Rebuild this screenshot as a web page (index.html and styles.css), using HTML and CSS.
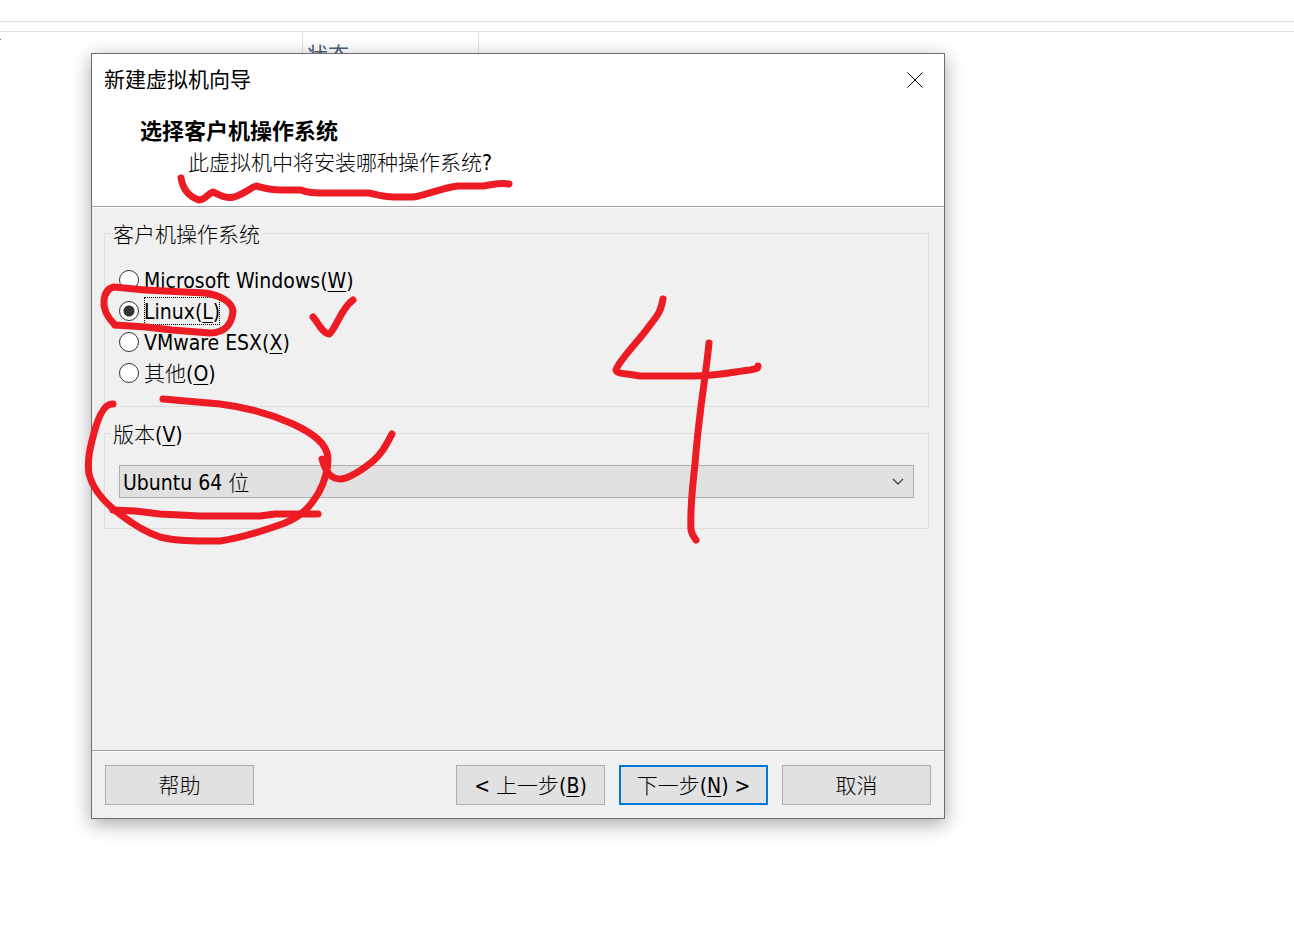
FILE: index.html
```html
<!DOCTYPE html>
<html lang="zh-CN">
    <head>
        <meta charset="UTF-8" />
        <meta name="viewport" content="width=device-width, initial-scale=1.0" />
        <title>新建虚拟机向导</title>
        <link rel="stylesheet" href="styles.css">
    </head>
    <body>
        <!-- Window behind the dialog -->
        <div class="explorer">
            <div class="toolbar"></div>
            <div class="columns">
                <div class="column column-name"><span class="tick"></span></div>
                <div class="column column-status">状态</div>
            </div>
        </div>

        <form class="dialog">
            <div class="titlebar">
                <span>新建虚拟机向导</span>
                <button type="button" class="close" aria-label="关闭">
                    <svg width="16" height="16" viewBox="0 0 16 16"><path d="M0.5 0.5l15 15M15.5 0.5l-15 15" /></svg>
                </button>
            </div>
            <div class="header">
                <h1>选择客户机操作系统</h1>
                <p>此虚拟机中将安装哪种操作系统?</p>
            </div>

            <div class="content">
                <fieldset class="group group-system">
                    <legend>客户机操作系统</legend>
                    <label class="option"><input type="radio" name="system"><span>Microsoft Windows(<u>W</u>)</span></label>
                    <label class="option"><input type="radio" name="system" checked><span>Linux(<u>L</u>)</span></label>
                    <label class="option"><input type="radio" name="system"><span>VMware ESX(<u>X</u>)</span></label>
                    <label class="option"><input type="radio" name="system"><span>其他(<u>O</u>)</span></label>
                </fieldset>

                <fieldset class="group group-version">
                    <legend><label for="version">版本(<u>V</u>)</label></legend>
                    <div class="select-wrap">
                        <select id="version">
                            <option>Ubuntu 64 位</option>
                        </select>
                        <svg class="arrow" width="12" height="8" viewBox="0 0 12 8"><path d="M1 1l5 5 5-5" /></svg>
                    </div>
                </fieldset>
            </div>

            <div class="footer">
                <button type="button" class="help">帮助</button>
                <button type="button">&lt; 上一步(<u>B</u>)</button>
                <button type="submit" class="default">下一步(<u>N</u>) &gt;</button>
                <button type="button">取消</button>
            </div>
        </form>

        <!-- Red pen marks -->
        <svg class="marks" width="960" height="600" viewBox="0 0 960 600">
            <path d="M181 178C183 190 190 197 199 200C206 200 208 193 213 192C220 195 225 199 234 197C244 194 250 188 256 186C264 188 270 190 280 190H301C306 192 312 193 320 193H369C378 195 384 197 394 197H413C427 195 441 188 458 186H483C492 185 500 182 509 184" />
            <path d="M115 325C107 317 103 309 104 300C105 293 108 288 114 287L145 290L205 293C220 295 232 302 233 311C232 323 226 333 210 333L172 330L146 327L115 325" />
            <path d="M313 317C318 322 322 333 329 334C335 331 341 308 353 300" />
            <path d="M113 404C104 403 98 418 94 433C90 448 87 460 89 474C94 494 110 507 121 515C134 525 145 532 160 537C175 541 192 541 220 541C242 538 263 531 285 523C304 515 312 504 319 492C325 481 328 471 328 458C327 443 312 433 293 424C270 414 245 407 220 404L163 399" />
            <path d="M113 510L135 511L160 514L200 516H260L275 514H318" />
            <path d="M322 459C326 473 331 479 341 479C351 478 363 469 372 462C382 454 386 445 392 434" />
            <path d="M663 299C661 310 659 314 650 325C639 341 619 360 616 370C617 374 623 373 640 376H692C717 376 733 372 750 370C757 369 758 368 758 366" />
            <path d="M709 343C706 375 699 411 695 464C692 490 690 510 691 530C692 535 694 537 696 540" />
        </svg>
    </body>
</html>
```
FILE: styles.css
```css
body {
    margin: 0;
    min-height: 100vh;
    background: white;
    color: black;
    font-family: "DejaVu Sans Condensed", "Noto Sans CJK SC", sans-serif;
    font-size: 21px;
    line-height: 28px;
}
.toolbar {
    height: 21px;
    border-bottom: 1px solid #e0e0e0;
    margin-bottom: 9px;
}
.columns {
    display: flex;
    border-top: 1px solid #e0e0e0;
}
.column {
    padding: 7px 4px;
    border-right: 1px solid #e0e0e0;
    box-sizing: border-box;
    color: #4c607a;
}
.column-name {
    width: 303px;
    padding-left: 0;
}
.column-status {
    width: 176px;
    padding-top: 9px;
}
.tick {
    display: block;
    width: 1px;
    height: 1px;
    background: #777;
}
.dialog {
    position: absolute;
    left: 91px;
    top: 53px;
    width: 854px;
    box-sizing: border-box;
    border: 1px solid #6e6e6e;
    background: #f0f0f0;
    box-shadow: 0 5px 18px rgba(0,0,0,0.35);
}
.titlebar {
    display: flex;
    justify-content: space-between;
    align-items: center;
    height: 52px;
    padding: 0 21px 0 12px;
    background: white;
}
.close {
    display: flex;
    padding: 0;
    border: none;
    background: none;
}
.close path {
    fill: none;
    stroke: black;
    stroke-width: 1;
}
.header {
    padding: 12px 48px 29px;
    background: white;
    border-bottom: 1px solid #a0a0a0;
}
h1 {
    margin: 0 0 3px;
    font-size: 22px;
    line-height: 28px;
}
.header p {
    margin: 0 0 0 48px;
}
.content {
    height: 543px;
    padding: 11px 15px 0 12px;
    box-sizing: border-box;
    border-top: 1px solid white;
}
.header p,
.content,
.footer {
    font-weight: 300;
}
.group {
    margin: 0 0 12px;
    border: 1px solid #dcdcdc;
}
.group legend {
    height: 28px;
    margin-left: 6px;
    padding: 0 2px;
    line-height: 32px;
}
.group-system {
    display: flex;
    flex-direction: column;
    padding: 19px 0;
}
.option {
    display: flex;
    align-items: center;
    gap: 5px;
    margin: 0 14px 3px;
}
.option:last-child {
    margin-bottom: 0;
}
.option input {
    appearance: none;
    width: 20px;
    height: 20px;
    margin: 0;
    border: 1px solid #333;
    border-radius: 50%;
    background: white;
}
.option span {
    padding-top: 2px;
    line-height: 26px;
}
.option input:checked {
    background: radial-gradient(circle, #333 5px, white 6px);
}
.option input:checked + span {
    outline: 1px dotted black;
    outline-offset: -1px;
}
u {
    text-decoration-thickness: 1px;
    text-underline-offset: 3px;
}
.group-version {
    padding: 18px 0 30px;
}
.select-wrap {
    position: relative;
    margin: 0 14px;
}
select {
    appearance: none;
    display: block;
    width: 100%;
    height: 33px;
    padding: 2px 30px 0 3px;
    border: 1px solid #adadad;
    border-radius: 0;
    background: #e1e1e1;
    color: black;
    font: inherit;
}
.arrow {
    position: absolute;
    right: 10px;
    top: 13px;
    pointer-events: none;
}
.arrow path {
    fill: none;
    stroke: #444;
    stroke-width: 1.3;
}
.footer {
    display: flex;
    gap: 14px;
    padding: 14px 13px 13px;
    border-top: 1px solid #a0a0a0;
    box-shadow: inset 0 1px white;
}
.footer button {
    width: 149px;
    height: 40px;
    padding: 2px 0 0;
    border: 1px solid #adadad;
    background: #e1e1e1;
    color: black;
    font: inherit;
}
.footer .help {
    margin-right: auto;
}
.footer .default {
    border: 2px solid #0078d7;
}
.marks {
    position: absolute;
    left: 0;
    top: 0;
    pointer-events: none;
}
.marks path {
    fill: none;
    stroke: #ed1c24;
    stroke-width: 7;
    stroke-linecap: round;
    stroke-linejoin: round;
}
```
